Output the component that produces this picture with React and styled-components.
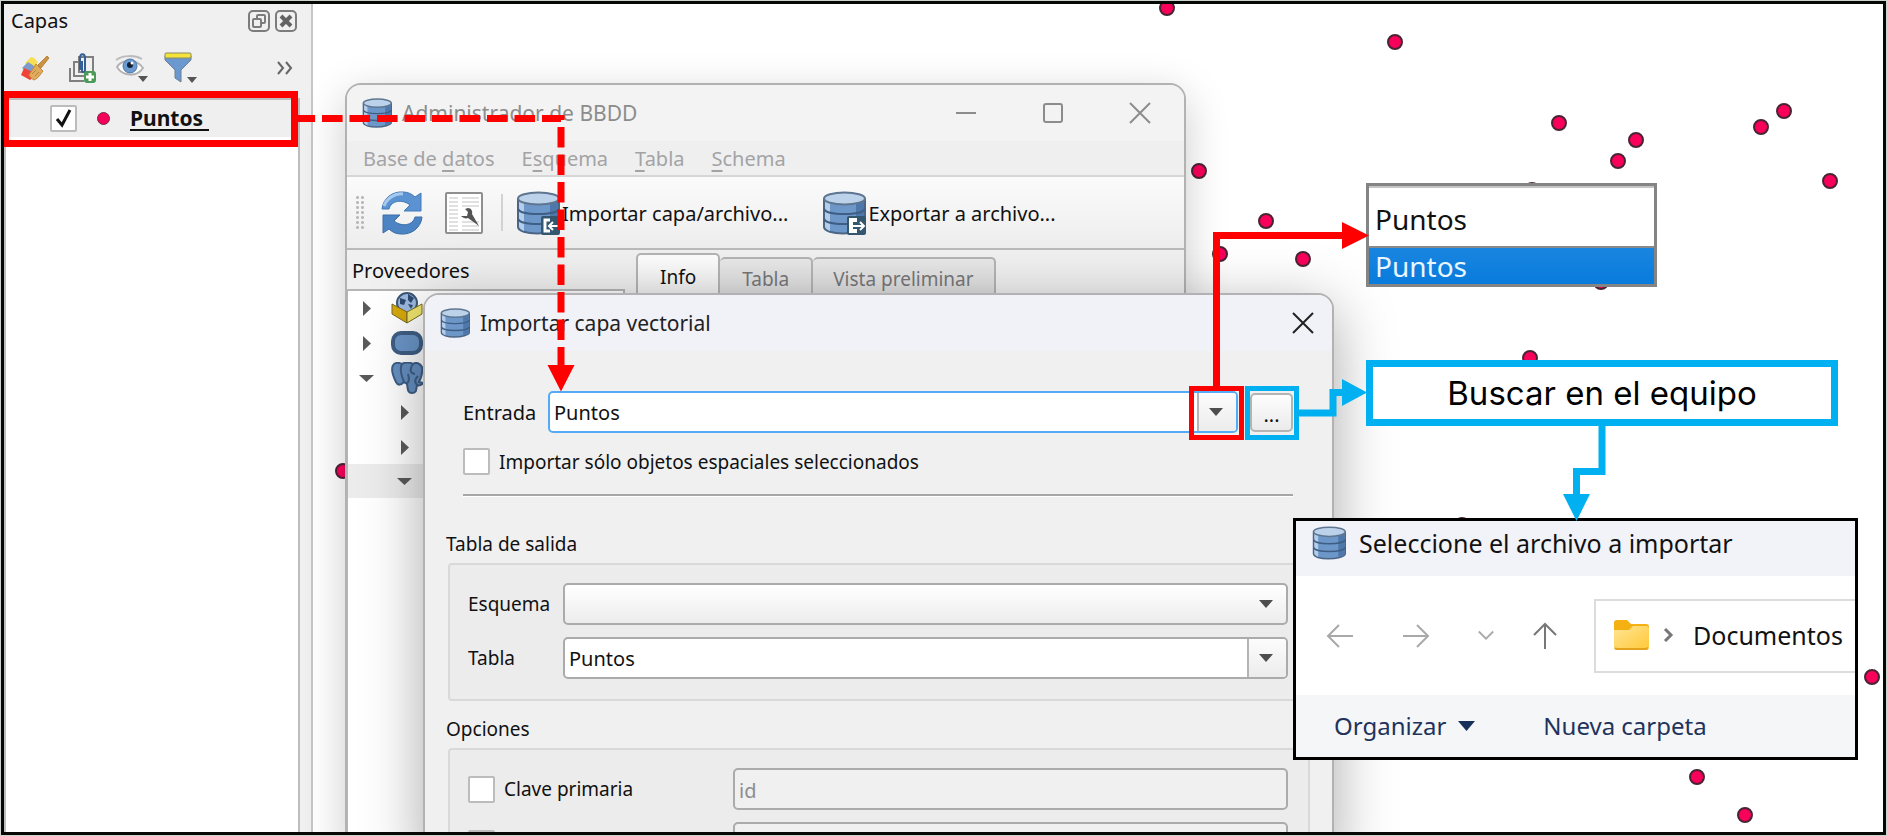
import React from "react";
import styled, { createGlobalStyle, css } from "styled-components";

const Global = createGlobalStyle`
  *, *::before, *::after { box-sizing: border-box; }
  html, body, #root { height: 100%; }
  body {
    margin: 0;
    background: #cfd3cf;
    font-family: "Noto Sans", "Open Sans", sans-serif;
    font-size: 20px;
    line-height: 24px;
    color: #111;
    overflow: hidden;
  }
  button, input, select { font: inherit; color: inherit; margin: 0; }
  button { background: none; border: 0; padding: 0; }
  ul { list-style: none; margin: 0; padding: 0; }
`;

const Page = styled.div`
  height: 100%;
  padding: 1px;
`;

const Frame = styled.main`
  position: relative;
  display: flex;
  height: 100%;
  border: 3px solid #060806;
  background: #fff;
  overflow: hidden;
`;

/* Layers panel */

const LayersPanel = styled.aside`
  display: flex;
  flex-direction: column;
  flex: none;
  width: 309px;
  background: #f0f0f0;
  border-right: 2px solid #c6c6c6;
`;

const PanelHeader = styled.header`
  display: flex;
  align-items: center;
  gap: 5px;
  height: 34px;
  padding: 0 14px 0 7px;
`;

const PanelTitle = styled.h2`
  flex: 1;
  margin: 0;
  font-size: 20px;
  font-weight: 400;
`;

const IconButton = styled.button`
  display: flex;
  align-items: center;
  justify-content: center;
  flex: none;
  width: ${(p) => p.$w || 24}px;
  height: ${(p) => p.$h || p.$w || 24}px;
`;

const PanelTools = styled.div`
  display: flex;
  align-items: center;
  gap: 16px;
  height: 60px;
  padding: 0 18px 0 16px;
`;

const Spacer = styled.span`
  flex: 1;
`;

const LayerList = styled.ul`
  flex: 1;
  margin-right: 11px;
  border: 2px solid #bdbdbd;
  border-bottom: 0;
  background: #fff;
`;

const LayerRow = styled.li`
  display: flex;
  align-items: center;
  height: 37px;
  padding-left: 44px;
  background: #efefef;
`;

const Check = styled.input`
  appearance: none;
  flex: none;
  width: 27px;
  height: 27px;
  border: 2px solid #bcbcbc;
  border-radius: 2px;
  background: #fff;
  ${(p) =>
    p.$marked &&
    css`
      &:checked {
        background: #fff
          url("data:image/svg+xml,%3Csvg xmlns='http://www.w3.org/2000/svg' viewBox='0 0 23 23'%3E%3Cpath d='M5 12l5 6 8-15' fill='none' stroke='%23111' stroke-width='3'/%3E%3C/svg%3E")
          center / 23px 23px no-repeat;
      }
    `}
`;

const LayerSymbol = styled.span`
  width: 13px;
  height: 13px;
  margin: 0 20px;
  border: 1px solid #7a2742;
  border-radius: 50%;
  background: #f5005a;
`;

const LayerName = styled.label`
  padding-right: 6px;
  border-bottom: 2px solid #111;
  font-size: 21px;
  line-height: 22px;
  font-weight: 700;
`;

/* Map */

const MapView = styled.section`
  flex: 1;
  min-width: 0;
  background: #fff;
`;

const Layer = styled.svg`
  position: absolute;
  inset: 0;
  width: 100%;
  height: 100%;
  pointer-events: none;
`;

/* Windows */

const Win = styled.section`
  position: absolute;
  left: ${(p) => p.$x}px;
  top: ${(p) => p.$y}px;
  bottom: -30px;
  display: flex;
  flex-direction: column;
  width: ${(p) => p.$w}px;
  border: 2px solid #b2b2b2;
  border-radius: 16px 16px 0 0;
  background: #f0f0f0;
  box-shadow: ${(p) => p.$shadow};
  overflow: hidden;
`;

const TitleBar = styled.header`
  display: flex;
  align-items: center;
  flex: none;
  height: 56px;
  padding: 0 ${(p) => p.$padR}px 0 15px;
  gap: 10px;
  background: ${(p) => p.$bg};
  color: ${(p) => p.$color || "#222"};
`;

const WinTitle = styled.h1`
  flex: 1;
  margin: 0;
  font-size: 21px;
  font-weight: 400;
  white-space: nowrap;
`;

const WinButtons = styled.div`
  display: flex;
  gap: 63px;
`;

const MenuBar = styled.nav`
  display: flex;
  flex: none;
  gap: 27px;
  height: 36px;
  padding: 2px 16px 0;
  border-bottom: 2px solid #d6d6d6;
  background: #efefef;
  color: #a3a3a6;
  u { text-underline-offset: 4px; }
`;

const ToolBar = styled.div`
  display: flex;
  align-items: center;
  flex: none;
  height: 73px;
  padding-left: 8px;
  border-bottom: 2px solid #b9b9b9;
  background: linear-gradient(#fbfbfb, #ededed);
`;

const Grip = styled.span`
  width: 10px;
  height: 35px;
  margin-right: 16px;
  background: radial-gradient(circle, #b9b9b9 1px, transparent 2px) 0 0 / 5px 5px;
`;

const ToolGap = styled.span`
  width: 22px;
`;

const ToolSeparator = styled.span`
  width: 2px;
  height: 37px;
  margin: 0 13px 0 18px;
  background: #d2d2d2;
`;

const TextTool = styled.button`
  display: flex;
  align-items: center;
  gap: 2px;
  margin-right: 34px;
  white-space: nowrap;
  span { padding-top: 2px; }
`;

const AdminBody = styled.div`
  display: flex;
  flex: 1;
  gap: 11px;
  background: #f0f0f0;
`;

const Providers = styled.section`
  display: flex;
  flex-direction: column;
  width: 278px;
`;

const ProvidersTitle = styled.h2`
  margin: 0;
  padding: 9px 5px 6px;
  font-size: 20px;
  font-weight: 400;
`;

const Tree = styled.ul`
  flex: 1;
  border: 2px solid #b5b5b5;
  border-left-width: 1px;
  background: #fff;
`;

const TreeRow = styled.li`
  display: flex;
  align-items: center;
  gap: 17px;
  height: 34px;
  margin-bottom: ${(p) => (p.$gap ? 1 : 0)}px;
  padding-left: ${(p) => (p.$level ? 49 : 11)}px;
  background: ${(p) => (p.$selected ? "#ececec" : "none")};
`;

const Tabs = styled.div`
  display: flex;
  align-items: flex-end;
  height: 50px;
  padding-top: 3px;
  font-size: 19px;
`;

const Tab = styled.button`
  height: ${(p) => (p.$active ? 47 : 43)}px;
  padding: 0 ${(p) => p.$pad}px 2px;
  border: 2px solid #b4b4b4;
  border-left-width: ${(p) => (p.$active ? 2 : 0)}px;
  border-bottom: 0;
  border-radius: 5px 5px 0 0;
  background: ${(p) => (p.$active ? "linear-gradient(#fdfdfd, #efefef)" : "linear-gradient(#e8e8e8, #dcdcdc)")};
  color: ${(p) => (p.$active ? "#111" : "#77777a")};
`;

/* Import dialog */

const DialogBody = styled.form`
  display: flex;
  flex-direction: column;
  padding: 40px 22px 0 21px;
`;

const InputRow = styled.div`
  display: flex;
  align-items: center;
  padding: 0 17px;
  label { flex: 1 0 85px; padding-top: 2px; }
`;

const Combo = styled.span`
  position: relative;
  display: flex;
  flex: none;
  width: ${(p) => p.$w}px;
  height: 42px;
  border: 2px solid ${(p) => (p.$focus ? "#55aaf5" : "#ababab")};
  border-radius: 5px;
  background: ${(p) => (p.$plain ? "linear-gradient(#fff, #ececec)" : "#fff")};
  overflow: hidden;
  select {
    appearance: none;
    flex: 1;
    min-width: 0;
    padding: 2px 44px 0 4px;
    border: 0;
    background: none;
    outline: 0;
  }
`;

const ComboArrow = styled.span`
  position: absolute;
  right: 0;
  top: 0;
  bottom: 0;
  display: flex;
  align-items: center;
  justify-content: center;
  width: 39px;
  padding-right: 4px;
  border-left: ${(p) => (p.$plain ? "2px solid transparent" : "2px solid #b4b4b4")};
  background: ${(p) => (p.$plain ? "none" : "linear-gradient(#fcfcfc, #ececec)")};
  pointer-events: none;
`;

const Browse = styled.button`
  width: 43px;
  height: 39px;
  margin-left: 12px;
  padding-top: 6px;
  border: 2px solid #b4b4b4;
  border-radius: 5px;
  background: linear-gradient(#fdfdfd, #ebebeb);
`;

const CheckRow = styled.label`
  display: flex;
  align-items: center;
  gap: 9px;
  padding: 15px 17px 0;
  font-size: 19px;
`;

const Rule = styled.hr`
  height: 3px;
  margin: 19px 17px 0;
  border: 0;
  border-top: 2px solid #a6a6a6;
  border-bottom: 1px solid #fff;
`;

const GroupTitle = styled.h2`
  margin: ${(p) => p.$top}px 0 7px;
  font-size: 19px;
  line-height: 24px;
  font-weight: 400;
`;

const Group = styled.div`
  display: flex;
  flex-direction: column;
  gap: 12px;
  margin: 0 0 0 2px;
  padding: 18px 20px 20px 18px;
  border: 2px solid #d9d9d9;
  border-radius: 4px;
  background: #ececec;
`;

const Field = styled.div`
  display: flex;
  align-items: center;
  label {
    display: flex;
    align-items: center;
    gap: 9px;
    flex: 1;
    font-size: 19px;
  }
`;

const TextBox = styled.input`
  width: 555px;
  height: 42px;
  padding: 2px 4px 0;
  border: 2px solid #ababab;
  border-radius: 5px;
  background: #f0f0f0;
  &:disabled { color: #8d8d90; }
`;

/* Callouts */

const OpenList = styled.ul`
  position: absolute;
  left: 1362px;
  top: 179px;
  width: 291px;
  border: 3px solid #848484;
  background: #fff;
  font-size: 28px;
  line-height: 36px;
`;

const OpenItem = styled.li`
  padding: ${(p) => (p.$current ? "13px 6px 9px" : "0 6px")};
  border-top: ${(p) => (p.$current ? "2px solid #c4c4c4" : "2px solid #8a8a8a")};
  background: ${(p) => (p.$current ? "#fff" : "linear-gradient(#1985e0, #087bdc)")};
  color: ${(p) => (p.$current ? "#111" : "#e9f6ff")};
`;

const Note = styled.p`
  position: absolute;
  left: 1362px;
  top: 356px;
  width: 472px;
  margin: 0;
  padding: 6px;
  border: 7px solid #00b0f0;
  background: #fff;
  color: #000;
  font: 400 33px/40px Inter, sans-serif;
  text-align: center;
`;

const FileDialog = styled.section`
  position: absolute;
  left: 1289px;
  top: 514px;
  display: flex;
  flex-direction: column;
  width: 565px;
  border: 3px solid #000;
  background: #fff;
  font-size: 25px;
  line-height: 32px;
`;

const FileTitle = styled.header`
  display: flex;
  align-items: center;
  gap: 13px;
  height: 55px;
  padding: 0 15px 11px 16px;
  background: #f2f2f9;
`;

const FileHeading = styled.h1`
  margin: 0;
  font-size: 25px;
  font-weight: 400;
  white-space: nowrap;
`;

const FileNav = styled.nav`
  display: flex;
  align-items: center;
  height: 119px;
  padding-left: 29px;
`;

const NavArrows = styled.div`
  display: flex;
  align-items: center;
  flex: none;
  width: 269px;
`;

const Address = styled.div`
  display: flex;
  align-items: center;
  flex: 1;
  gap: 14px;
  height: 74px;
  padding: 0 0 2px 17px;
  border: 2px solid #dcdcdc;
  border-right: 0;
  overflow: hidden;
  span { padding-left: 4px; }
`;

const FileBar = styled.div`
  display: flex;
  align-items: center;
  gap: 68px;
  height: 62px;
  padding: 0 38px;
  background: #f5f6f8;
  color: #22335b;
  font-size: 24px;
  button { display: flex; align-items: center; gap: 12px; white-space: nowrap; }
`;

/* Drawings */

const DbIcon = ({ size = 30, badge }) => (
  <svg width={size} height={size} viewBox="0 0 44 44" aria-hidden="true">
    <path d="M2 8v28c0 4 9 6.500 19 6.500s22-2.500 22-6.500V8z" fill="#6d97c9" stroke="#4b6685" strokeWidth="2" />
    <path d="M3 9v27c1 2 3 3 5 4V12z" fill="#b5cde8" />
    <path d="M34 12v28c5-1 8-2 8-4V9z" fill="#4e78ab" />
    <path d="M2 18c2 4 11 5 20 5s19-1 21-5M2 28c2 4 11 5 20 5s19-1 21-5" fill="none" stroke="#3f5e83" strokeWidth="2" />
    <ellipse cx="22.500" cy="7.500" rx="20.500" ry="6" fill="#bcd2ea" stroke="#5e7690" strokeWidth="2" />
    {badge && (
      <g>
        <rect x="25" y="25" width="19" height="19" rx="2" fill="#35566f" />
        {badge === "in" ? (
          <path d="M34 29h-5v11h5" fill="none" stroke="#fff" strokeWidth="3" />
        ) : (
          <path d="M35 29h-6v11h6" fill="none" stroke="#fff" strokeWidth="4" />
        )}
        {badge === "in" ? (
          <path d="M44 35H34M37 31l-4 4 4 4" fill="none" stroke="#fff" strokeWidth="2" />
        ) : (
          <path d="M31 35h11M38 31l4 4-4 4" fill="none" stroke="#fff" strokeWidth="2" />
        )}
      </g>
    )}
  </svg>
);

const Caret = ({ color = "#4d4d4d", w = 14 }) => (
  <svg width={w} height={w === 14 ? 8 : 10} viewBox="0 0 14 8" preserveAspectRatio="none" aria-hidden="true">
    <path d="M0 0h14L7 8z" fill={color} />
  </svg>
);

const Twist = ({ open }) => (
  <svg width="15" height="15" viewBox="0 0 15 15" aria-hidden="true">
    <path d={open ? "M0 4h15L7.500 11z" : "M4 0l8 7.500L4 15z"} fill="#5a5a5a" />
  </svg>
);

const Cross = ({ color }) => (
  <svg width="22" height="22" viewBox="0 0 22 22" aria-hidden="true">
    <path d="M1 1l20 20M21 1L1 21" stroke={color} strokeWidth="2" />
  </svg>
);

const FloatIcon = () => (
  <svg width="22" height="22" viewBox="0 0 22 22" fill="none" stroke="#7c7c7c" aria-hidden="true">
    <rect x="1" y="1" width="20" height="20" rx="4" strokeWidth="2" />
    <rect x="9" y="5" width="8" height="8" rx="1" strokeWidth="2" />
    <rect x="5" y="9" width="8" height="8" rx="1" fill="#f0f0f0" strokeWidth="2" />
  </svg>
);

const ClosePanelIcon = () => (
  <svg width="22" height="22" viewBox="0 0 22 22" fill="none" stroke="#7c7c7c" aria-hidden="true">
    <rect x="1" y="1" width="20" height="20" rx="4" strokeWidth="2" />
    <path d="M6 6l10 10M16 6L6 16" stroke="#626262" strokeWidth="4" />
  </svg>
);

const BrushIcon = () => (
  <svg width="30" height="26" viewBox="0 0 30 26" aria-hidden="true">
    <path d="M5 8l6-6c3 0 5 3 7 5l-6 8z" fill="#f6df52" />
    <path d="M2 13l6-6c3 2 6 3 8 7l-6 5z" fill="#7d9ccb" />
    <path d="M1 20l3-7c4 2 8 3 12 7l-6 5z" fill="#ee4538" />
    <path d="M27 1l2 2-8 10-3-3z" fill="#c99343" stroke="#b98638" />
    <path d="M16 9l7 7-3 4c-2 3-4 4-6 5-2-1-4-3-5-5z" fill="#e0ab5c" stroke="#c08a42" />
    <path d="M12 19l4-4M15 21l4-4" stroke="#bb8140" />
  </svg>
);

const GroupIcon = () => (
  <svg width="28" height="32" viewBox="0 0 28 32" fill="none" aria-hidden="true">
    <path d="M2 16v13h14" stroke="#808080" strokeWidth="2" />
    <path d="M10 10H6v14h14" stroke="#808080" strokeWidth="2" />
    <path d="M11 5h14v15H11z" stroke="#808080" strokeWidth="2" />
    <path d="M12 18V6c0-5 5-5 5 0v12c0 3-3 3-3 0V9" stroke="#355f96" strokeWidth="2" />
    <rect x="16" y="19" width="12" height="12" rx="3" fill="#4b9a57" />
    <path d="M22 21v8M18 25h8" stroke="#fff" strokeWidth="3" />
  </svg>
);

const EyeIcon = () => (
  <svg width="34" height="28" viewBox="0 0 34 28" fill="none" aria-hidden="true">
    <path d="M3 13C8 5 22 4 29 14c-6 9-20 9-26-1z" fill="#fff" stroke="#b3b3b3" strokeWidth="2" />
    <path d="M2 6C9 1 21 1 28 5" stroke="#bcbcbc" strokeWidth="2" />
    <circle cx="16" cy="12" r="7" fill="#6c9bd0" stroke="#4a76aa" />
    <circle cx="16" cy="11" r="3" fill="#132238" />
    <circle cx="18" cy="9" r="1.500" fill="#fff" />
    <path d="M24 22h10l-5 6z" fill="#555" />
  </svg>
);

const FilterIcon = () => (
  <svg width="34" height="32" viewBox="0 0 34 32" aria-hidden="true">
    <path d="M1 4h26v4L17 18v12l-6-4v-8L1 8z" fill="#6a98cf" stroke="#6d7f92" />
    <rect x="1" y="1" width="26" height="5" rx="1" fill="#f4e338" stroke="#8c8c60" />
    <path d="M23 25h10l-5 6z" fill="#555" />
  </svg>
);

const MoreIcon = () => (
  <svg width="16" height="14" viewBox="0 0 16 14" fill="none" aria-hidden="true">
    <path d="M1 1l5 6-5 6M9 1l5 6-5 6" stroke="#666" strokeWidth="2" />
  </svg>
);

const RefreshIcon = () => (
  <svg width="42" height="44" viewBox="0 0 42 44" aria-hidden="true">
    <path d="M1 18C2 7 12 0 22 1c5 0 9 2 12 5l6-4v18H23l6-6c-7-6-19-5-21 4z" fill="#5b93d2" stroke="#4479b8" />
    <path d="M41 26c-1 11-11 18-21 17-5 0-9-2-12-5l-6 4V24h17l-6 6c7 6 19 5 21-4z" fill="#4c83c3" stroke="#3c6da9" />
    <path d="M3 15C6 7 14 2 22 3" fill="none" stroke="#a8c9ee" strokeWidth="3" />
  </svg>
);

const SqlIcon = () => (
  <svg width="38" height="42" viewBox="0 0 38 42" aria-hidden="true">
    <rect x="1" y="1" width="36" height="40" rx="1" fill="#fff" stroke="#8f8f8f" strokeWidth="2" />
    <path d="M4 6h9M4 10h9M4 14h9M4 18h9M4 22h9M4 26h9M4 30h9M4 34h9M4 38h9M17 6h17M17 10h17M17 14h17M17 30h17M17 34h17M17 38h17" stroke="#c2c2c2" />
    <path d="M16 24c2 2 5 3 7 2l11 8-7-12c1-3-1-6-4-6l-3 1 3 3-1 4-4 0z" fill="#555" />
  </svg>
);

const PackageIcon = () => (
  <svg width="32" height="32" viewBox="0 0 32 32" aria-hidden="true">
    <circle cx="16" cy="11" r="10" fill="#9dbbe0" stroke="#3c5876" strokeWidth="2" />
    <path d="M9 6l6 2-2 5-4-1zM17 2l6 4-3 5-3-3zM17 12l5 1-2 4z" fill="#2e4c72" />
    <path d="M1 12l15 8v11L1 22z" fill="#d6a80b" stroke="#7b6920" />
    <path d="M31 12l-15 8v11l15-9z" fill="#efe56e" stroke="#7b6920" />
  </svg>
);

const OracleIcon = () => (
  <svg width="32" height="24" viewBox="0 0 32 24" aria-hidden="true">
    <rect x="2" y="2" width="28" height="20" rx="8" fill="#6b96c8" stroke="#3f5f86" strokeWidth="4" />
  </svg>
);

const ElephantIcon = () => (
  <svg width="34" height="32" viewBox="0 0 34 32" aria-hidden="true">
    <path d="M3 2c3-2 6-1 8 0 3-2 8-2 11 0 3-2 7-1 9 3 1 6-1 11-3 15l4 1c-1 2-4 3-6 2-1 4 0 8-5 8-5 0-4-5-5-9l-3-2c-3 3-6 4-8 0C2 14-1 6 3 2z" fill="#6690c2" stroke="#3f5f86" strokeWidth="2" />
    <path d="M11 2c-3 5-1 11 2 18M22 2c-3 4-4 9 2 10M15 22c4-2 3-7 2-10M26 23c-3-3-2-6 1-9" fill="none" stroke="#3f5f86" strokeWidth="2" />
  </svg>
);

const FolderIcon = () => (
  <svg width="36" height="30" viewBox="0 0 36 30" aria-hidden="true">
    <defs>
      <linearGradient id="folder" x1="0" y1="0" x2="1" y2="1">
        <stop offset="0" stopColor="#ffe594" />
        <stop offset="1" stopColor="#ffc837" />
      </linearGradient>
    </defs>
    <path d="M1 3c0-2 1-3 3-3h10l4 4h15c2 0 3 1 3 3v10H1z" fill="#f5b011" />
    <path d="M1 10h15l4-4h13c2 0 3 1 3 3v18c0 2-1 3-3 3H4c-2 0-3-1-3-3z" fill="url(#folder)" />
    <path d="M2 28c1 1 1 1 2 1h29l2-1" stroke="#e4a31c" strokeWidth="2" fill="none" />
  </svg>
);

const points = [
  [1167, 8], [1395, 42], [1559, 123], [1636, 140], [1618, 161], [1784, 111], [1761, 127],
  [1830, 181], [1199, 171], [1266, 221], [1303, 259], [1220, 254], [1532, 190], [1601, 282],
  [1530, 358], [1462, 525], [1872, 677], [1697, 777], [1745, 815], [343, 471],
];

const MapPoints = () => (
  <Layer aria-hidden="true">
    <g transform="translate(-4 -4)" fill="#f9005b" stroke="#4a2433" strokeWidth="2">
      {points.map(([x, y]) => (
        <circle key={`${x}-${y}`} cx={x} cy={y} r="7" />
      ))}
    </g>
  </Layer>
);

const Connectors = () => (
  <Layer aria-hidden="true">
    <g transform="translate(-4 -4)" fill="none" strokeWidth="7">
      <g stroke="#ff0000">
        <rect x="5.500" y="94.500" width="289" height="49" />
        <path d="M294.500 118.500H561V366" strokeDasharray="20.600 6.900" />
        <rect x="1191.500" y="388.500" width="50" height="49" strokeWidth="5" />
        <path d="M1216.500 388V235.500H1343" />
      </g>
      <g stroke="#00b0f0">
        <rect x="1247.500" y="388.500" width="49" height="49" strokeWidth="5" />
        <path d="M1299 413H1333V392.500H1343" />
        <path d="M1602 425V471.500H1576.500V495" />
      </g>
      <g stroke="none">
        <path d="M547.500 365h27L561 391.500zM1342 222v27l27-13.500z" fill="#ff0000" />
        <path d="M1342 379v27l25-13.500zM1563 494h27l-13.500 27z" fill="#00b0f0" />
      </g>
    </g>
  </Layer>
);

const Capas = () => (
  <LayersPanel>
    <PanelHeader>
      <PanelTitle>Capas</PanelTitle>
      <IconButton $w={22} aria-label="Flotar"><FloatIcon /></IconButton>
      <IconButton $w={22} aria-label="Cerrar panel"><ClosePanelIcon /></IconButton>
    </PanelHeader>
    <PanelTools>
      <IconButton $w={30} aria-label="Estilo"><BrushIcon /></IconButton>
      <IconButton $w={32} aria-label="Añadir grupo"><GroupIcon /></IconButton>
      <IconButton $w={34} aria-label="Visibilidad"><EyeIcon /></IconButton>
      <IconButton $w={34} aria-label="Filtrar"><FilterIcon /></IconButton>
      <Spacer />
      <IconButton $w={16} aria-label="Más"><MoreIcon /></IconButton>
    </PanelTools>
    <LayerList>
      <LayerRow>
        <Check id="layer" type="checkbox" defaultChecked $marked />
        <LayerSymbol />
        <LayerName htmlFor="layer">Puntos</LayerName>
      </LayerRow>
    </LayerList>
  </LayersPanel>
);

const AdminWindow = () => (
  <Win $x={341} $y={79} $w={841} $shadow="0 12px 44px rgba(0,0,0,.2)">
    <TitleBar $bg="#f3f3f3" $color="#8c8c8c" $padR={32}>
      <DbIcon size={30} />
      <WinTitle>Administrador de BBDD</WinTitle>
      <WinButtons>
        <IconButton aria-label="Minimizar">
          <svg width="20" height="2"><path d="M0 1h20" stroke="#8c8c8c" strokeWidth="2" /></svg>
        </IconButton>
        <IconButton aria-label="Maximizar">
          <svg width="20" height="20"><rect x="1" y="1" width="18" height="18" rx="2" fill="none" stroke="#8c8c8c" strokeWidth="2" /></svg>
        </IconButton>
        <IconButton aria-label="Cerrar"><Cross color="#8c8c8c" /></IconButton>
      </WinButtons>
    </TitleBar>
    <MenuBar>
      <button>Base de <u>d</u>atos</button>
      <button>E<u>s</u>quema</button>
      <button><u>T</u>abla</button>
      <button><u>S</u>chema</button>
    </MenuBar>
    <ToolBar>
      <Grip />
      <IconButton $w={42} $h={44} aria-label="Actualizar"><RefreshIcon /></IconButton>
      <ToolGap />
      <IconButton $w={38} $h={44} aria-label="Ventana SQL"><SqlIcon /></IconButton>
      <ToolSeparator />
      <TextTool><DbIcon size={44} badge="in" /><span>Importar capa/archivo...</span></TextTool>
      <TextTool><DbIcon size={44} badge="out" /><span>Exportar a archivo...</span></TextTool>
    </ToolBar>
    <AdminBody>
      <Providers>
        <ProvidersTitle>Proveedores</ProvidersTitle>
        <Tree>
          <TreeRow $gap><Twist /><PackageIcon /></TreeRow>
          <TreeRow $gap><Twist /><OracleIcon /></TreeRow>
          <TreeRow><Twist open /><ElephantIcon /></TreeRow>
          <TreeRow $gap $level={1}><Twist /></TreeRow>
          <TreeRow $level={1}><Twist /></TreeRow>
          <TreeRow $level={1} $selected><Twist open /></TreeRow>
        </Tree>
      </Providers>
      <Tabs>
        <Tab $active $pad={22}>Info</Tab>
        <Tab $pad={22}>Tabla</Tab>
        <Tab $pad={20}>Vista preliminar</Tab>
      </Tabs>
    </AdminBody>
  </Win>
);

const ImportDialog = () => (
  <Win $x={419} $y={289} $w={911} $shadow="0 14px 60px rgba(0,0,0,.34)">
    <TitleBar $bg="#f1f1f8" $padR={17}>
      <DbIcon size={30} />
      <WinTitle>Importar capa vectorial</WinTitle>
      <IconButton aria-label="Cerrar"><Cross color="#222" /></IconButton>
    </TitleBar>
    <DialogBody>
      <InputRow>
        <label htmlFor="source">Entrada</label>
        <Combo $w={690} $focus>
          <select id="source" defaultValue="Puntos"><option>Puntos</option></select>
          <ComboArrow><Caret /></ComboArrow>
        </Combo>
        <Browse type="button" aria-label="Examinar">...</Browse>
      </InputRow>
      <CheckRow>
        <Check type="checkbox" />
        Importar sólo objetos espaciales seleccionados
      </CheckRow>
      <Rule />
      <GroupTitle $top={35}>Tabla de salida</GroupTitle>
      <Group>
        <Field>
          <label htmlFor="schema">Esquema</label>
          <Combo $w={725} $plain>
            <select id="schema" />
            <ComboArrow $plain><Caret /></ComboArrow>
          </Combo>
        </Field>
        <Field>
          <label htmlFor="table">Tabla</label>
          <Combo $w={725}>
            <select id="table" defaultValue="Puntos"><option>Puntos</option></select>
            <ComboArrow><Caret /></ComboArrow>
          </Combo>
        </Field>
      </Group>
      <GroupTitle $top={16}>Opciones</GroupTitle>
      <Group>
        <Field>
          <label><Check type="checkbox" />Clave primaria</label>
          <TextBox defaultValue="id" disabled aria-label="Clave primaria" />
        </Field>
        <Field>
          <label><Check type="checkbox" aria-label="Columna de geometría" /></label>
          <TextBox disabled aria-label="Columna de geometría" />
        </Field>
      </Group>
    </DialogBody>
  </Win>
);

const NavIcon = ({ d, color = "#a9a9a9", w = 28 }) => (
  <svg width={w} height="28" viewBox={`0 0 ${w} 28`} fill="none" stroke={color} strokeWidth="2" aria-hidden="true">
    <path d={d} />
  </svg>
);

const FilePicker = () => (
  <FileDialog>
    <FileTitle>
      <DbIcon size={34} />
      <FileHeading>Seleccione el archivo a importar</FileHeading>
    </FileTitle>
    <FileNav>
      <NavArrows>
        <IconButton $w={30} aria-label="Atrás"><NavIcon d="M27 14H2M13 3L2 14l11 11" /></IconButton>
        <IconButton $w={122} $h={30} aria-label="Adelante"><NavIcon d="M1 14h25M15 3l11 11-11 11" /></IconButton>
        <IconButton $w={18} $h={30} aria-label="Recientes"><NavIcon w={20} d="M2 9l8 8 8-8" /></IconButton>
        <IconButton $w={100} $h={30} aria-label="Subir"><NavIcon color="#777" d="M14 27V2M3 13L14 2l11 11" /></IconButton>
      </NavArrows>
      <Address>
        <FolderIcon />
        <svg width="12" height="14" viewBox="0 0 12 14"><path d="M2 1l6 6-6 6" fill="none" stroke="#777" strokeWidth="3" /></svg>
        <span>Documentos</span>
      </Address>
    </FileNav>
    <FileBar>
      <button>Organizar <Caret w={17} color="#16305a" /></button>
      <button>Nueva carpeta</button>
    </FileBar>
  </FileDialog>
);

export default function App() {
  return (
    <Page>
      <Global />
      <Frame>
        <Capas />
        <MapView aria-label="Mapa" />
        <MapPoints />
        <AdminWindow />
        <ImportDialog />
        <OpenList role="listbox" aria-label="Entrada">
          <OpenItem $current>Puntos</OpenItem>
          <OpenItem role="option" aria-selected="true">Puntos</OpenItem>
        </OpenList>
        <Note>Buscar en el equipo</Note>
        <FilePicker />
        <Connectors />
      </Frame>
    </Page>
  );
}
